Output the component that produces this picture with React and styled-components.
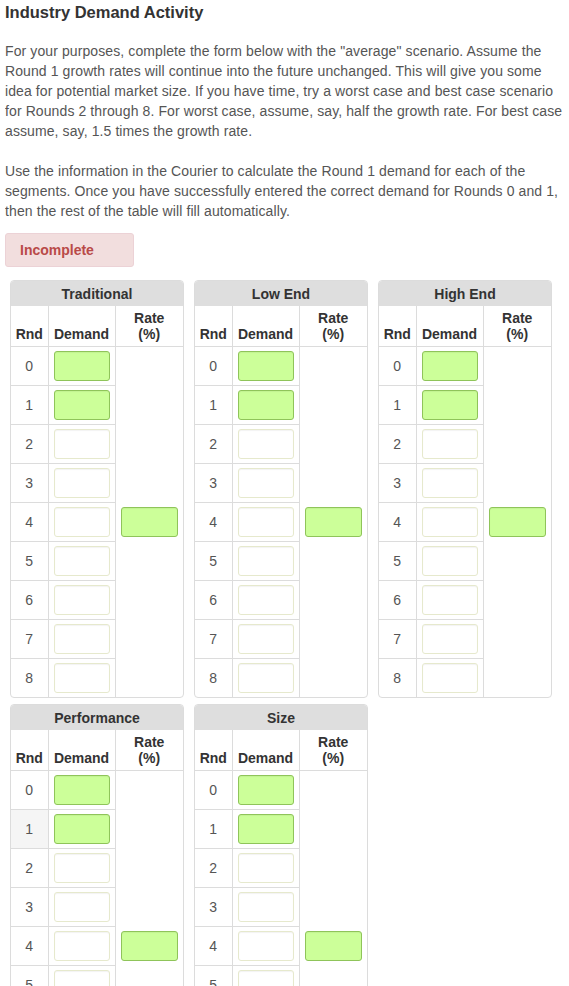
import React from 'react';
import styled, { createGlobalStyle } from 'styled-components';

const GlobalStyle = createGlobalStyle`
  body {
    margin: 5px;
    background: #fff;
    font-family: "Liberation Sans", Arial, sans-serif;
    color: #555;
  }
`;

const Title = styled.h1`
  margin: -1px 0 21px;
  font-size: 16.5px;
  line-height: 16px;
  font-weight: bold;
  color: #333;
`;

const Para = styled.p`
  margin: 0 0 ${p => (p.$last ? '12px' : '20px')};
  font-size: 14px;
  line-height: 20px;
  letter-spacing: 0.1px;
  color: #555;
`;

const Status = styled.div`
  box-sizing: border-box;
  width: 129px;
  height: 34px;
  padding: 0 14px;
  display: flex;
  align-items: center;
  background: #f2dede;
  border: 1px solid #ecd2d6;
  border-radius: 3px;
  color: #b94a48;
  font-size: 14px;
  font-weight: bold;
`;

const Segments = styled.div`
  display: flex;
  flex-wrap: wrap;
  margin-top: 13px;
`;

const Card = styled.div`
  box-sizing: border-box;
  width: 174px;
  margin: 0 5px 6px;
  border: 1px solid #dcdcdc;
  border-radius: 4px;
  overflow: hidden;
`;

const Table = styled.table`
  width: 100%;
  border-collapse: collapse;
  table-layout: fixed;
  font-size: 14px;
`;

const SegmentHead = styled.th`
  height: 25px;
  padding: 0;
  background: #dedede;
  color: #333;
  font-weight: bold;
  text-align: center;
`;

const ColHead = styled.th`
  height: 36px;
  padding: 0 0 4px;
  vertical-align: bottom;
  text-align: center;
  color: #333;
  font-weight: bold;
  line-height: 16px;
  border-left: ${p => (p.$first ? 'none' : '1px solid #dcdcdc')};
`;

const RndCell = styled.td`
  height: 38px;
  padding: 0;
  text-align: center;
  color: #555;
  border-top: 1px solid #dcdcdc;
  background: ${p => (p.$hover ? '#f5f5f5' : 'transparent')};
`;

const DemandCell = styled.td`
  padding: 0;
  text-align: center;
  border-top: 1px solid #dcdcdc;
  border-left: 1px solid #dcdcdc;
`;

const RateCell = styled.td`
  padding: 0;
  text-align: center;
  vertical-align: middle;
  border-top: 1px solid #dcdcdc;
  border-left: 1px solid #dcdcdc;
`;

const Field = styled.input`
  box-sizing: border-box;
  display: block;
  margin: 0 auto;
  width: ${p => p.$w};
  height: 30px;
  padding: 0 4px;
  border-radius: 3px;
  font: inherit;
  border: 1px solid ${p => (p.$ok ? '#8fc45a' : '#e6e9cd')};
  background: ${p => (p.$ok ? '#ccff99' : '#fff')};
  box-shadow: inset 0 1px 1px rgba(0, 0, 0, 0.05);
  outline: none;
`;

const rounds = [0, 1, 2, 3, 4, 5, 6, 7, 8];

function Segment({ name, hoverRow }) {
  return (
    <Card>
      <Table>
        <colgroup>
          <col style={{ width: 37 }} />
          <col style={{ width: 67 }} />
          <col />
        </colgroup>
        <thead>
          <tr>
            <SegmentHead colSpan={3}>{name}</SegmentHead>
          </tr>
          <tr>
            <ColHead $first>Rnd</ColHead>
            <ColHead>Demand</ColHead>
            <ColHead>
              Rate
              <br />
              (%)
            </ColHead>
          </tr>
        </thead>
        <tbody>
          {rounds.map(r => (
            <tr key={r}>
              <RndCell $hover={hoverRow === r}>{r}</RndCell>
              <DemandCell>
                <Field $w="56px" $ok={r < 2} readOnly />
              </DemandCell>
              {r === 0 && (
                <RateCell rowSpan={9}>
                  <Field $w="57px" $ok readOnly />
                </RateCell>
              )}
            </tr>
          ))}
        </tbody>
      </Table>
    </Card>
  );
}

const segments = [
  { name: 'Traditional' },
  { name: 'Low End' },
  { name: 'High End' },
  { name: 'Performance', hoverRow: 1 },
  { name: 'Size' }
];

export default function App() {
  return (
    <>
      <GlobalStyle />
      <Title>Industry Demand Activity</Title>
      <Para>
        For your purposes, complete the form below with the "average" scenario. Assume the
        Round 1 growth rates will continue into the future unchanged. This will give you some
        idea for potential market size. If you have time, try a worst case and best case scenario
        for Rounds 2 through 8. For worst case, assume, say, half the growth rate. For best case
        assume, say, 1.5 times the growth rate.
      </Para>
      <Para $last>
        Use the information in the Courier to calculate the Round 1 demand for each of the
        segments. Once you have successfully entered the correct demand for Rounds 0 and 1,
        then the rest of the table will fill automatically.
      </Para>
      <Status>Incomplete</Status>
      <Segments>
        {segments.map(s => (
          <Segment key={s.name} name={s.name} hoverRow={s.hoverRow} />
        ))}
      </Segments>
    </>
  );
}
